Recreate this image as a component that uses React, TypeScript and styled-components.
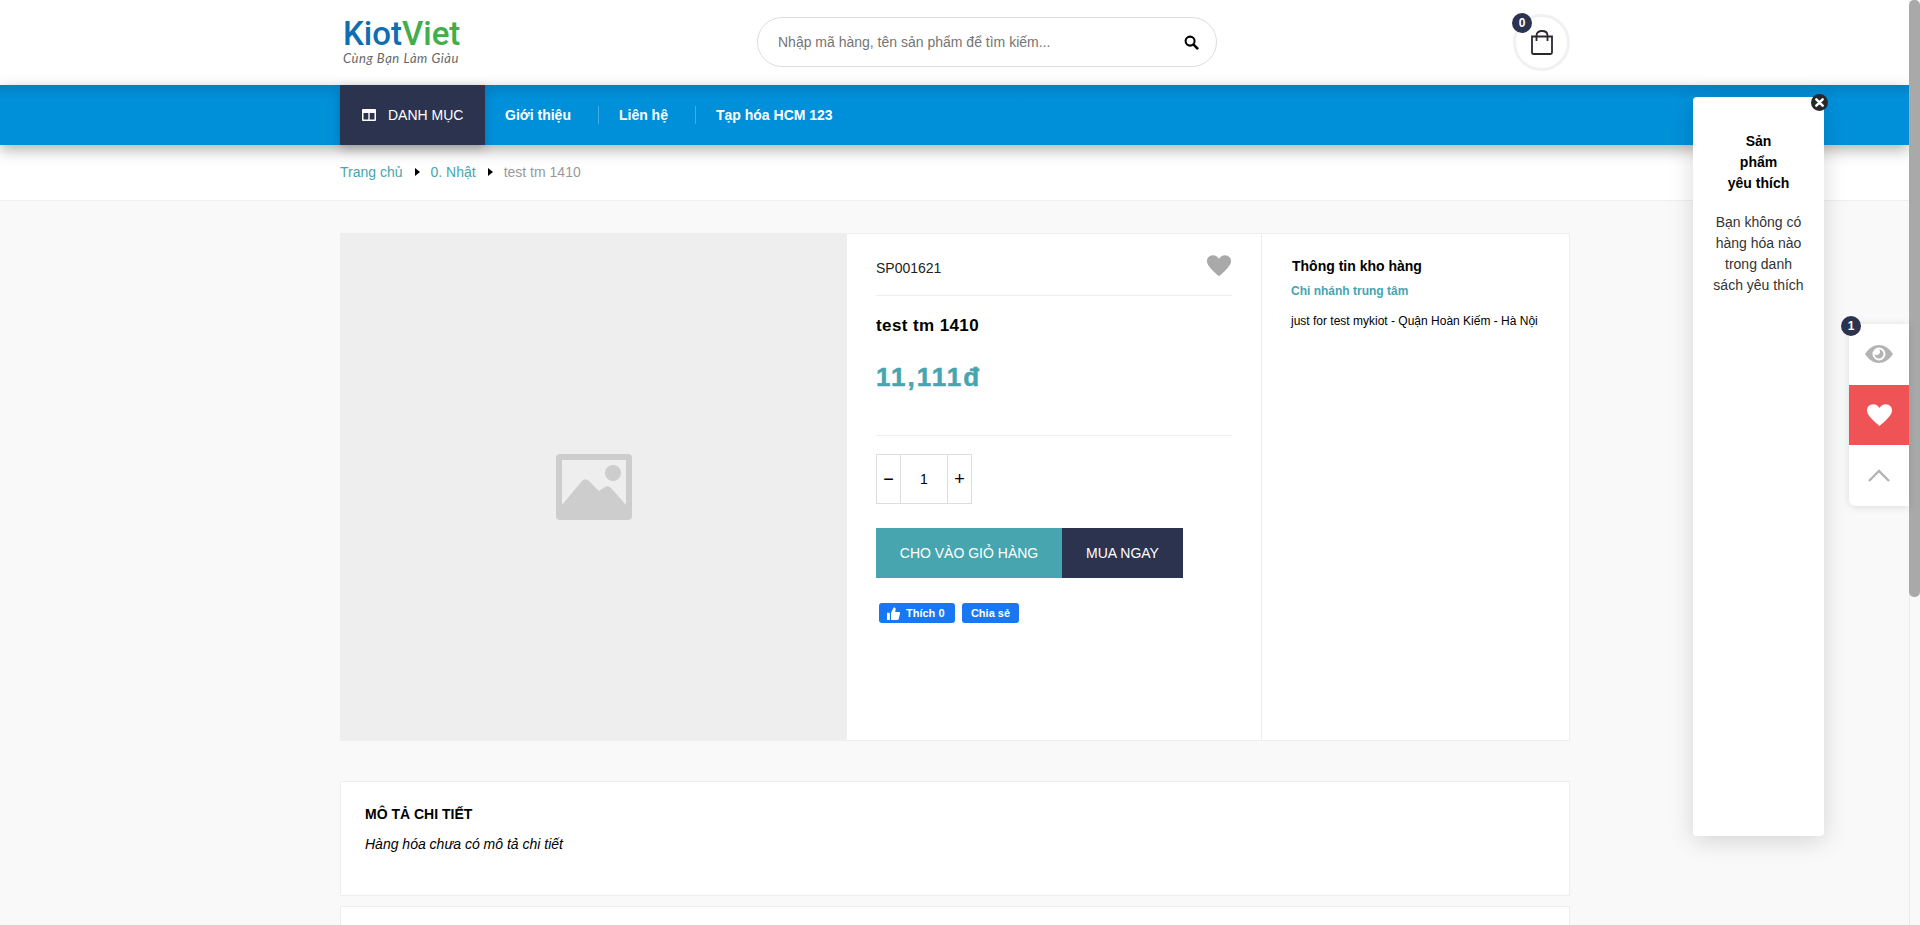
import React from "react";
import styled, { createGlobalStyle } from "styled-components";

const Global = createGlobalStyle`
  html, body { margin: 0; padding: 0; height: 925px; overflow: hidden; background: #f9f9f9; }
  body { font-family: "Liberation Sans", Arial, sans-serif; color: #000; }
  * { box-sizing: border-box; }
`;

const Page = styled.div`
  position: relative;
  width: 1920px;
  height: 925px;
  overflow: hidden;
`;
const Content = styled.div`
  width: 1909px;
  height: 925px;
  overflow: hidden;
`;
const ScrollTrack = styled.div`
  position: absolute;
  top: 0;
  right: 0;
  width: 11px;
  height: 925px;
  background: #f9f9f9;
  border-left: 1px solid #ececec;
`;
const ScrollThumb = styled.div`
  width: 11px;
  height: 597px;
  margin-left: -1px;
  border-radius: 5px;
  background: #a9a9a9;
`;
const Wrap = styled.div`
  width: 1230px;
  margin-left: 340px;
`;
const HeaderBar = styled.header`
  height: 85px;
  background: #fff;
`;
const HeaderInner = styled(Wrap)`
  height: 85px;
  display: flex;
  align-items: center;
`;
const Logo = styled.div`
  width: 417px;
  padding: 0 0 0 3px;
  display: flex;
  flex-direction: column;
`;
const LogoWord = styled.div`
  font-family: "Roboto", sans-serif;
  font-weight: 500;
  font-size: 33px;
  line-height: 29px;
  height: 29px;
  color: #0f6eb0;
`;
const LogoGreen = styled.span`
  color: #43ad4a;
`;
const LogoTag = styled.div`
  font-family: "Lato", sans-serif;
  font-style: italic;
  font-size: 13px;
  line-height: 15px;
  margin-top: 3px;
  color: #666;
  letter-spacing: 0.55px;
`;
const Search = styled.div`
  width: 460px;
  height: 50px;
  margin-top: -1px;
  border: 1px solid #ddd;
  border-radius: 25px;
  display: flex;
  align-items: center;
  justify-content: space-between;
  padding: 0 17px 0 20px;
  font-size: 14px;
  color: #757575;
  background: #fff;
`;
const CartBox = styled.div`
  margin-left: auto;
  position: relative;
  width: 57px;
  height: 57px;
  border: 3px solid #f1f1f1;
  border-radius: 50%;
  display: flex;
  align-items: center;
  justify-content: center;
`;
const CartBadge = styled.span`
  position: absolute;
  top: -4px;
  left: -4px;
  width: 20px;
  height: 20px;
  border-radius: 50%;
  background: #2c334f;
  color: #fff;
  font-size: 12px;
  font-weight: 700;
  display: flex;
  align-items: center;
  justify-content: center;
`;
const NavBar = styled.nav`
  height: 60px;
  background: linear-gradient(#0580c4 0, #0090da 14px, #0090da 100%);
  box-shadow: 0 5px 14px rgba(0, 0, 0, 0.3);
  position: relative;
`;
const NavInner = styled(Wrap)`
  display: flex;
  height: 60px;
  align-items: center;
`;
const CatButton = styled.div`
  width: 145px;
  height: 60px;
  background: #2c334f;
  color: #fff;
  display: flex;
  align-items: center;
  gap: 12px;
  padding-left: 22px;
  font-size: 14px;
  box-shadow: 0 4px 10px rgba(0, 0, 0, 0.2);
`;
const NavLink = styled.a`
  color: #fff;
  font-size: 14px;
  font-weight: 700;
  line-height: 18px;
  padding: 0 27px 0 20px;
  & + & {
    border-left: 1px solid rgba(255, 255, 255, 0.25);
  }
`;
const Crumbs = styled.div`
  height: 56px;
  background: #fff;
  border-bottom: 1px solid #eee;
`;
const CrumbInner = styled(Wrap)`
  height: 54px;
  display: flex;
  align-items: center;
  font-size: 14px;
`;
const CrumbLink = styled.span`
  color: #46a5af;
`;
const CrumbCurrent = styled.span`
  color: #999;
`;
const CrumbArrow = styled.span`
  width: 0;
  height: 0;
  margin: 0 11px 0 12px;
  border-left: 5px solid #000;
  border-top: 4px solid transparent;
  border-bottom: 4px solid transparent;
`;
const ProductCard = styled(Wrap)`
  margin-top: 32px;
  height: 508px;
  background: #fff;
  border: 1px solid #eee;
  display: flex;
`;
const Photo = styled.div`
  width: 507px;
  flex: none;
  margin: -1px 0 -1px -1px;
  background: #eee;
  display: flex;
  align-items: center;
  justify-content: center;
`;
const Info = styled.div`
  width: 415px;
  flex: none;
  border-right: 1px solid #eee;
  padding: 0 29px;
  display: flex;
  flex-direction: column;
  align-items: flex-start;
`;
const SkuRow = styled.div`
  width: 100%;
  height: 62px;
  flex: none;
  border-bottom: 1px solid #eee;
  display: flex;
  align-items: center;
  justify-content: space-between;
  font-size: 14px;
  color: #222;
`;
const SkuText = styled.span`
  padding-top: 7px;
`;
const SkuHeart = styled.span`
  display: flex;
  margin-top: 2px;
`;
const Title = styled.h1`
  margin: 20px 0 0;
  font-size: 17px;
  line-height: 20px;
  letter-spacing: 0.4px;
  font-weight: 700;
`;
const Price = styled.div`
  margin-top: 25px;
  font-size: 26px;
  line-height: 32px;
  font-weight: 700;
  letter-spacing: 2px;
  color: #46a5af;
  -webkit-text-stroke: 0.5px #46a5af;
`;
const Divider = styled.div`
  width: 100%;
  height: 1px;
  flex: none;
  background: #eee;
  margin-top: 42px;
`;
const Qty = styled.div`
  margin-top: 18px;
  width: 96px;
  height: 50px;
  flex: none;
  border: 1px solid #ddd;
  display: flex;
  font-size: 14px;
`;
const QtyBtn = styled.div`
  width: 23px;
  font-size: 18px;
  display: flex;
  align-items: center;
  justify-content: center;
`;
const QtyValue = styled.div`
  flex: 1;
  border-left: 1px solid #ddd;
  border-right: 1px solid #ddd;
  display: flex;
  align-items: center;
  justify-content: center;
`;
const Actions = styled.div`
  margin-top: 24px;
  display: flex;
`;
const BuyButton = styled.div<{ $bg: string; $w: number }>`
  width: ${(p) => p.$w}px;
  height: 50px;
  background: ${(p) => p.$bg};
  color: #fff;
  font-size: 14px;
  display: flex;
  align-items: center;
  justify-content: center;
`;
const Social = styled.div`
  margin: 25px 0 0 3px;
  display: flex;
  gap: 7px;
`;
const FbLike = styled.div`
  height: 20px;
  width: 76px;
  border-radius: 3px;
  background: #1877f2;
  color: #fff;
  font-size: 11px;
  font-weight: 700;
  display: flex;
  align-items: center;
  gap: 6px;
  padding-left: 8px;
`;
const FbShare = styled(FbLike)`
  width: 57px;
  padding-left: 0;
  justify-content: center;
`;
const Stock = styled.aside`
  flex: 1;
  padding: 23px 29px;
`;
const StockTitle = styled.div`
  font-size: 14px;
  line-height: 18px;
  font-weight: 700;
  padding-left: 1px;
`;
const StockBranch = styled.div`
  margin-top: 8px;
  font-size: 12px;
  line-height: 16px;
  font-weight: 700;
  color: #46a5af;
`;
const StockAddr = styled.div`
  margin-top: 14px;
  font-size: 12px;
  line-height: 16px;
`;
const Panel = styled(Wrap)`
  margin-top: 40px;
  height: 115px;
  background: #fff;
  border: 1px solid #eee;
  padding: 23px 24px;
`;
const PanelNext = styled(Wrap)`
  margin-top: 10px;
  height: 60px;
  background: #fff;
  border: 1px solid #eee;
`;
const PanelTitle = styled.div`
  font-size: 14px;
  line-height: 18px;
  font-weight: 700;
`;
const PanelText = styled.div`
  margin-top: 12px;
  font-size: 14px;
  line-height: 18px;
  font-style: italic;
`;
const Wish = styled.div`
  position: absolute;
  left: 1693px;
  top: 97px;
  width: 131px;
  height: 739px;
  background: #fff;
  border-radius: 4px;
  box-shadow: 0 5px 25px rgba(0, 0, 0, 0.15);
  text-align: center;
  padding: 34px 16px 0;
  z-index: 3;
`;
const WishClose = styled.div`
  position: absolute;
  top: -3px;
  right: -4px;
  width: 17px;
  height: 17px;
  border-radius: 50%;
  background: #26282c;
  display: flex;
  align-items: center;
  justify-content: center;
`;
const WishTitle = styled.div`
  font-size: 14px;
  line-height: 21px;
  font-weight: 700;
`;
const WishText = styled.div`
  margin-top: 18px;
  font-size: 14px;
  line-height: 21px;
  color: #333;
`;
const Dock = styled.div`
  position: absolute;
  left: 1849px;
  top: 324px;
  width: 60px;
  height: 182px;
  background: #fff;
  border-radius: 6px 0 0 6px;
  box-shadow: 0 1px 8px rgba(0, 0, 0, 0.12);
  display: flex;
  flex-direction: column;
  z-index: 2;
`;
const DockItem = styled.div<{ $active?: boolean }>`
  flex: 1;
  display: flex;
  align-items: center;
  justify-content: center;
  background: ${(p) => (p.$active ? "#ef5355" : "transparent")};
`;
const DockBadge = styled.span`
  position: absolute;
  top: -8px;
  left: -8px;
  width: 20px;
  height: 20px;
  border-radius: 50%;
  background: #2c334f;
  color: #fff;
  font-size: 12px;
  font-weight: 700;
  display: flex;
  align-items: center;
  justify-content: center;
`;

const HEART = "M12 21.3 C11.7 21 2 13.6 1 8.7 C0.2 4.6 3.2 2 6.4 2 C8.8 2 10.9 3.4 12 5.4 C13.1 3.4 15.2 2 17.6 2 C20.8 2 23.8 4.6 23 8.7 C22 13.6 12.3 21 12 21.3 Z";

const Heart = ({ size, color }: { size: number; color: string }) => (
  <svg width={size} height={size} viewBox="0 0 24 24"><path d={HEART} fill={color} /></svg>
);

export default function App() {
  return (
    <Page>
      <Global />
      <Content>
        <HeaderBar>
          <HeaderInner>
            <Logo>
              <LogoWord>Kiot<LogoGreen>Viet</LogoGreen></LogoWord>
              <LogoTag>Cùng Bạn Làm Giàu</LogoTag>
            </Logo>
            <Search>
              <span>Nhập mã hàng, tên sản phẩm để tìm kiếm...</span>
              <svg width="15" height="15" viewBox="0 0 16 16" fill="none" stroke="#000" strokeWidth="2.2">
                <circle cx="6.5" cy="6.5" r="4.8" />
                <path d="M10 10 L15 15" strokeWidth="2.8" />
              </svg>
            </Search>
            <CartBox>
              <CartBadge>0</CartBadge>
              <svg width="22" height="25" viewBox="0 0 22 25" fill="none" stroke="#2a2730" strokeWidth="1.8">
                <path d="M1 6.5 H21 V22.5 Q21 24 19.5 24 H2.5 Q1 24 1 22.5 Z" />
                <path d="M5.5 11 V5.5 Q5.5 1 11 1 Q16.5 1 16.5 5.5 V11" />
              </svg>
            </CartBox>
          </HeaderInner>
        </HeaderBar>
        <NavBar>
          <NavInner>
            <CatButton>
              <svg width="14" height="12" viewBox="0 0 14 12">
                <path fill="#fff" fillRule="evenodd" d="M1 0 H13 Q14 0 14 1 V11 Q14 12 13 12 H1 Q0 12 0 11 V1 Q0 0 1 0 Z M1.5 4 V10.5 H6.3 V4 Z M7.7 4 V10.5 H12.5 V4 Z" />
              </svg>
              DANH MỤC
            </CatButton>
            <NavLink>Giới thiệu</NavLink>
            <NavLink>Liên hệ</NavLink>
            <NavLink>Tạp hóa HCM 123</NavLink>
          </NavInner>
        </NavBar>
        <Crumbs>
          <CrumbInner>
            <CrumbLink>Trang chủ</CrumbLink>
            <CrumbArrow />
            <CrumbLink>0. Nhật</CrumbLink>
            <CrumbArrow />
            <CrumbCurrent>test tm 1410</CrumbCurrent>
          </CrumbInner>
        </Crumbs>
        <ProductCard>
          <Photo>
            <svg width="76" height="66" viewBox="0 0 76 66">
              <path fill="#cdcdcd" fillRule="evenodd" d="M4 0 H72 Q76 0 76 4 V62 Q76 66 72 66 H4 Q0 66 0 62 V4 Q0 0 4 0 Z M6 6 V51 L26 27 Q29.5 23.5 33 27 L43 37 L49 33 Q52 31 55 34 L70 51 V6 Z" />
              <circle cx="57" cy="19" r="8" fill="#cdcdcd" />
            </svg>
          </Photo>
          <Info>
            <SkuRow>
              <SkuText>SP001621</SkuText>
              <SkuHeart><Heart size={26} color="#a9a9a9" /></SkuHeart>
            </SkuRow>
            <Title>test tm 1410</Title>
            <Price>11,111đ</Price>
            <Divider />
            <Qty>
              <QtyBtn>−</QtyBtn>
              <QtyValue>1</QtyValue>
              <QtyBtn>+</QtyBtn>
            </Qty>
            <Actions>
              <BuyButton $bg="#46a5af" $w={186}>CHO VÀO GIỎ HÀNG</BuyButton>
              <BuyButton $bg="#2c334f" $w={121}>MUA NGAY</BuyButton>
            </Actions>
            <Social>
              <FbLike>
                <svg width="13" height="13" viewBox="0 0 16 16">
                  <path fill="#fff" d="M0 7 H3.5 V16 H0 Z M5 7 L8 1 Q9 0 10 1 Q11 2 10.5 4 L10 6 H15 Q16.3 6.3 16 8 L14.5 14.5 Q14 16 12.5 16 H5 Z" />
                </svg>
                Thích 0
              </FbLike>
              <FbShare>Chia sẻ</FbShare>
            </Social>
          </Info>
          <Stock>
            <StockTitle>Thông tin kho hàng</StockTitle>
            <StockBranch>Chi nhánh trung tâm</StockBranch>
            <StockAddr>just for test mykiot - Quận Hoàn Kiếm - Hà Nội</StockAddr>
          </Stock>
        </ProductCard>
        <Panel>
          <PanelTitle>MÔ TẢ CHI TIẾT</PanelTitle>
          <PanelText>Hàng hóa chưa có mô tả chi tiết</PanelText>
        </Panel>
        <PanelNext />
      </Content>
      <ScrollTrack><ScrollThumb /></ScrollTrack>
      <Wish>
        <WishClose>
          <svg width="9" height="9" viewBox="0 0 10 10" stroke="#fff" strokeWidth="2.8" strokeLinecap="round">
            <path d="M1.5 1.5 L8.5 8.5 M8.5 1.5 L1.5 8.5" />
          </svg>
        </WishClose>
        <WishTitle>Sản<br />phẩm<br />yêu thích</WishTitle>
        <WishText>Bạn không có hàng hóa nào trong danh sách yêu thích</WishText>
      </Wish>
      <Dock>
        <DockBadge>1</DockBadge>
        <DockItem>
          <svg width="28" height="18" viewBox="0 0 28 18">
            <path fill="#b3b3b3" fillRule="evenodd" d="M0 9 C4 3 9 0 14 0 C19 0 24 3 28 9 C24 15 19 18 14 18 C9 18 4 15 0 9 Z M14 2.5 A6.5 6.5 0 1 0 14 15.5 A6.5 6.5 0 1 0 14 2.5 Z" />
            <path fill="#b3b3b3" d="M14 4.5 A4.5 4.5 0 1 1 9.5 9 A3 3 0 0 0 14 4.5 Z" />
          </svg>
        </DockItem>
        <DockItem $active>
          <Heart size={27} color="#fff" />
        </DockItem>
        <DockItem>
          <svg width="22" height="13" viewBox="0 0 22 13" fill="none" stroke="#b3b3b3" strokeWidth="2.4">
            <path d="M1 12 L11 2 L21 12" />
          </svg>
        </DockItem>
      </Dock>
    </Page>
  );
}
